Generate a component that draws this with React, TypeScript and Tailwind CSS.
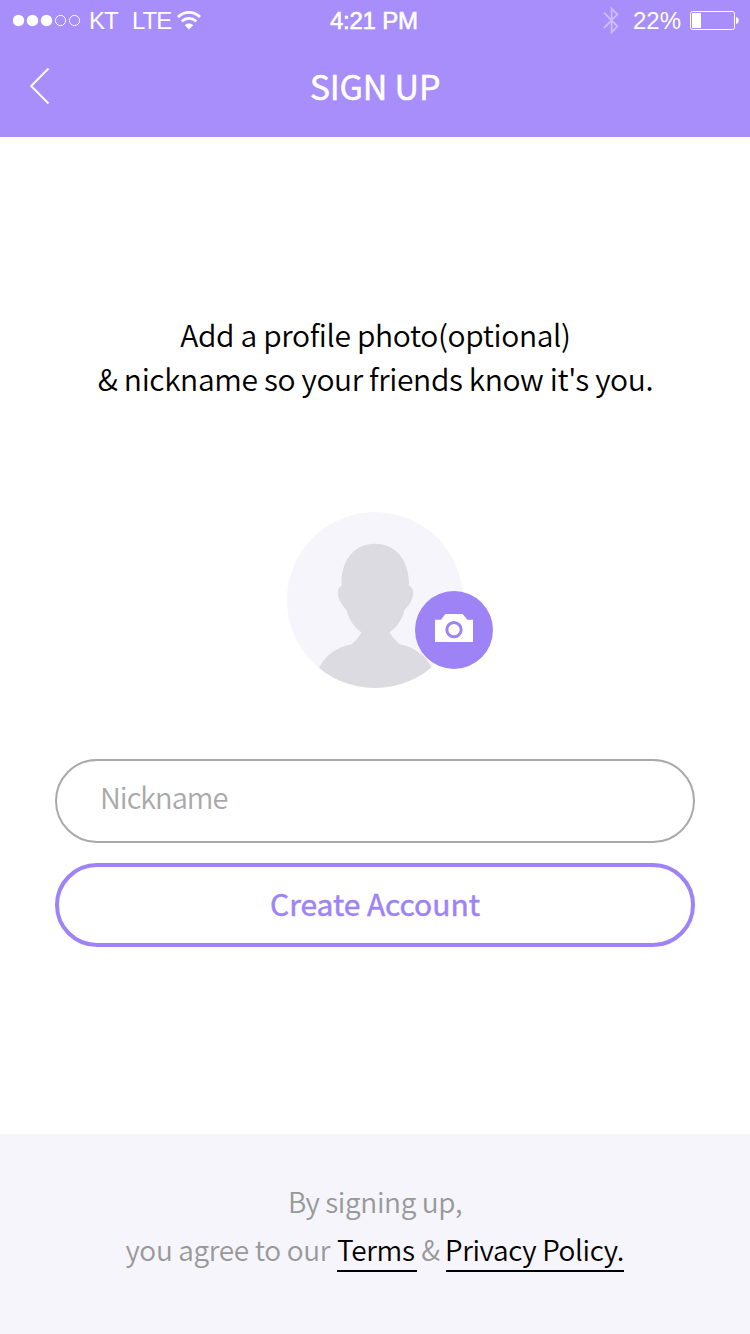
import React from "react";

const sans = "font-['Noto_Sans_CJK_KR',sans-serif]";
const system = "font-['Liberation_Sans',sans-serif]";

function SignalDots() {
  return (
    <svg className="mt-px h-[14px] w-[68px]" viewBox="0 0 68 14" fill="none">
      <circle cx="5.5" cy="6.5" r="5.7" fill="#fff" />
      <circle cx="19.5" cy="6.5" r="5.7" fill="#fff" />
      <circle cx="33.5" cy="6.5" r="5.7" fill="#fff" />
      <circle cx="47.5" cy="6.5" r="5.1" stroke="#fff" />
      <circle cx="61.5" cy="6.5" r="5.1" stroke="#fff" />
    </svg>
  );
}

function WifiIcon() {
  return (
    <svg className="ml-px h-[19px] w-[24px]" viewBox="0 0 72 57" fill="none" stroke="#fff">
      <path d="M3 18C22 -0.5 50 -0.5 69 18" strokeWidth="8.5" />
      <path d="M14 30.5C27 19 45 19 58 30.5" strokeWidth="8" />
      <path d="M23.5 43C30 36 42 36 48.5 43L36 55.5Z" fill="#fff" stroke="none" />
    </svg>
  );
}

function BluetoothIcon() {
  return (
    <svg className="h-[28px] w-[16px]" viewBox="0 0 48 84" fill="none" stroke="#fff" strokeOpacity="0.42" strokeWidth="5.5">
      <path d="M3 20L43 61L26 79V8L43 25L3 66" />
    </svg>
  );
}

function BatteryIcon() {
  return (
    <svg className="h-[19px] w-[50px]" viewBox="0 0 50 19" fill="none">
      <rect x="0.5" y="0.5" width="44" height="18" rx="2" stroke="#fff" />
      <rect x="2" y="2" width="9" height="15" rx="0.6" fill="#fff" />
      <path d="M46 6C49.7 6.5 49.7 12.5 46 13Z" fill="#fff" />
    </svg>
  );
}

function StatusBar() {
  return (
    <div className={`flex h-10 items-center text-[24px] leading-[40px] ${system}`}>
      <div className="flex w-[330px] items-center pl-[13px]">
        <SignalDots />
        <span className="ml-[8px] w-[43px] pt-[2px] tracking-[-0.9px]">KT</span>
        <span className="w-[44px] pt-[2px] tracking-[-1px]">LTE</span>
        <WifiIcon />
      </div>
      <span className="w-[90px] pt-[2px] tracking-[-0.25px] whitespace-nowrap [-webkit-text-stroke:0.6px_white]">4:21 PM</span>
      <div className="flex flex-1 items-center justify-end pr-[10px]">
        <BluetoothIcon />
        <span className="ml-[14px] w-[57px] pt-[2px]">22%</span>
        <BatteryIcon />
      </div>
    </div>
  );
}

function Header() {
  return (
    <header className="h-[137px] bg-[#a78efa] text-white">
      <StatusBar />
      <div className="flex h-[92px] items-center pl-[30px]">
        <svg className="h-[38px] w-[20px]" viewBox="0 0 20 38" fill="none" stroke="#fff" strokeWidth="1.9">
          <path d="M18.5 1.5L1.2 19L18.5 36.5" />
        </svg>
        <h1 className="ml-[-50px] flex-1 pb-px text-center text-[34px] leading-[51px] font-normal tracking-[-0.2px] [-webkit-text-stroke:0.5px_white]">
          SIGN UP
        </h1>
      </div>
    </header>
  );
}

function Avatar() {
  return (
    <div className="relative mx-auto h-[176px] w-[176px]">
      <svg className="size-full" viewBox="51 36 528 528">
        <defs>
          <clipPath id="avatar-disc">
            <circle cx="315" cy="300" r="264" />
          </clipPath>
        </defs>
        <circle cx="315" cy="300" r="264" fill="#f6f5fc" />
        <path
          clipPath="url(#avatar-disc)"
          fill="#dddbe2"
          d="M315 131C379 131 419 183 417 257C429 261 432 276 428 292C424 308 413 321 403 331C397 359 380 382 359 397C366 412 378 422 389 433C431 441 468 467 485 502V570H148V502C166 466 202 440 245 433C256 422 267 412 274 397C252 382 236 358 230 331C220 321 209 304 205 290C201 274 205 260 215 257C211 183 251 131 315 131Z"
        />
      </svg>
      <button aria-label="Add photo" className="absolute top-[79px] left-[128px] size-[78px] rounded-full bg-[#9e83f6]">
        <svg className="size-full" viewBox="435 273 234 234">
          <path fill="#fff" d="M495 359H513L526 342H578L592 359H609V426H495Z" />
          <circle cx="552" cy="389" r="21.5" fill="none" stroke="#9e83f6" strokeWidth="9" />
        </svg>
      </button>
    </div>
  );
}

export default function App() {
  return (
    <div className={`flex h-[1334px] w-[750px] flex-col bg-white ${sans}`}>
      <Header />
      <main className="flex flex-1 flex-col px-[55px] pt-[175px]">
        <p className="pl-px text-center text-[30px] leading-[44px] font-[350] tracking-[-0.36px] whitespace-nowrap text-black">
          Add a profile photo(optional)
          <br />
          &amp; nickname so your friends know it's you.
        </p>
        <div className="pt-[112px] pb-[71px]">
          <Avatar />
        </div>
        <input
          placeholder="Nickname"
          className="h-[84px] w-full rounded-full border-2 border-[#a9a9a9] px-[43px] pb-[10px] text-[29px] font-[350] tracking-[-0.98px] placeholder:text-[#a9a9a9]"
        />
        <button className="mt-5 h-[84px] rounded-full border-4 border-[#9e83f6] pb-[4px] text-[30px] leading-[72px] font-normal tracking-[-0.06px] text-[#9e83f6] [-webkit-text-stroke:0.5px_#9e83f6]">
          Create Account
        </button>
      </main>
      <footer className="h-[200px] bg-[#f6f5fc] pt-[43px] text-center text-[28px] leading-[48px] font-[350] tracking-[-0.35px] whitespace-nowrap text-[#999]">
        <p>By signing up,</p>
        <p className="flex justify-center text-left">
          <span className="w-[211px] indent-[-0.5px]">you agree to our</span>
          <a className="h-[47px] w-[80px] border-b-2 border-black text-black">Terms</a>
          <span className="w-[29px] pr-[2px] text-center">&amp;</span>
          <a className="h-[47px] w-[178px] border-b-2 border-black indent-[-1px] text-black">Privacy Policy.</a>
        </p>
      </footer>
    </div>
  );
}
